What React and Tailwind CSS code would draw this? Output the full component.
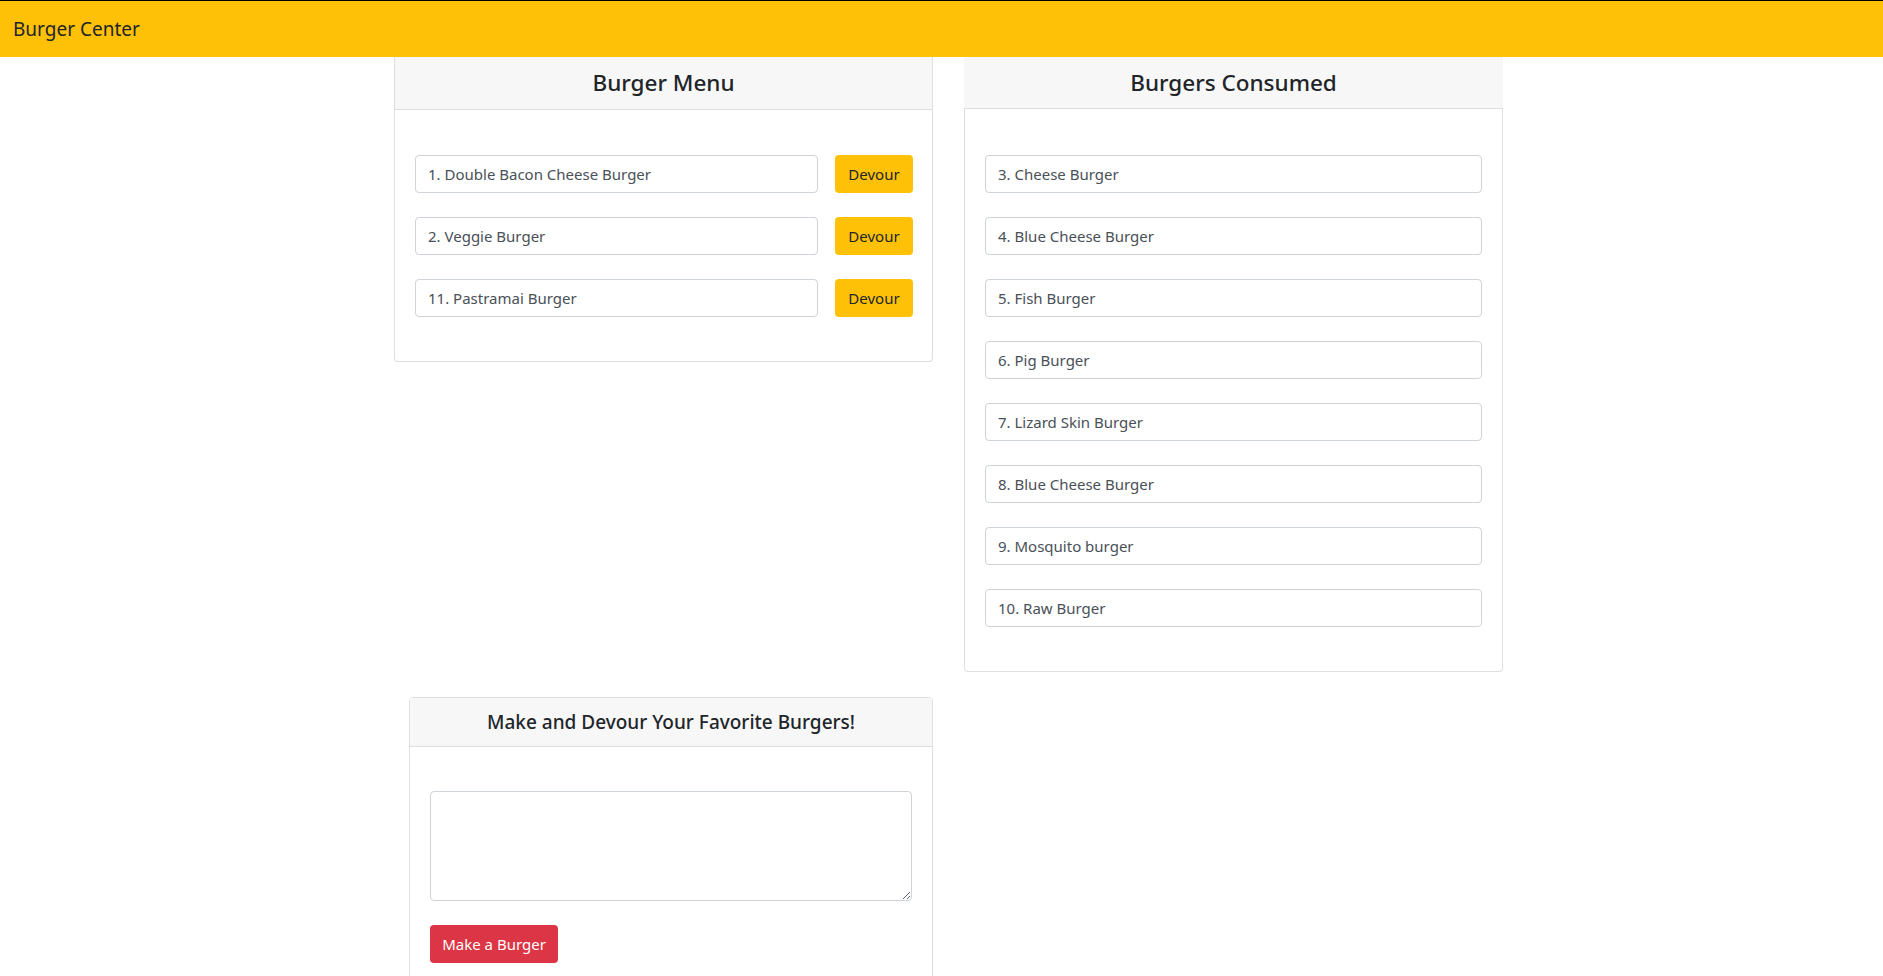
import React from "react";

const font = { fontFamily: '"Segoe UI", "Noto Sans", "Open Sans", Arial, sans-serif' };

const menu = ["1. Double Bacon Cheese Burger", "2. Veggie Burger", "11. Pastramai Burger"];
const consumed = [
  "3. Cheese Burger",
  "4. Blue Cheese Burger",
  "5. Fish Burger",
  "6. Pig Burger",
  "7. Lizard Skin Burger",
  "8. Blue Cheese Burger",
  "9. Mosquito burger",
  "10. Raw Burger",
];

function Field({ value, grow }) {
  return (
    <div
      className={
        grow
          ? "flex h-[38px] min-w-0 flex-1 items-center rounded-[4px] border border-[#ced4da] bg-white px-[12px] text-[15px] text-[#495057]"
          : "flex h-[38px] w-full shrink-0 items-center rounded-[4px] border border-[#ced4da] bg-white px-[12px] text-[15px] text-[#495057]"
      }
    >
      {value}
    </div>
  );
}

export default function App() {
  return (
    <div className="min-h-screen bg-white text-[#212529]" style={font}>
      <nav className="flex h-[57px] items-center border-t border-black bg-[#ffc107] px-[13px] text-[19px] text-[#212529]">
        Burger Center
      </nav>

      <div className="flex items-start gap-[31px] pl-[394px]">
        <div className="w-[539px] rounded-b-[4px] border-x border-b border-[#dfdfdf]">
          <div className="flex h-[53px] items-center justify-center border-b border-[#dfdfdf] bg-[#f7f7f7] text-[22.5px] font-medium">
            Burger Menu
          </div>
          <div className="flex flex-col gap-[24px] pb-[44px] pl-[20px] pr-[19px] pt-[45px]">
            {menu.map((m) => (
              <div key={m} className="flex items-center gap-[17px]">
                <Field value={m} grow />
                <button className="h-[38px] w-[78px] shrink-0 rounded-[4px] bg-[#ffc107] text-[15px] text-[#212529]">
                  Devour
                </button>
              </div>
            ))}
          </div>
        </div>

        <div className="w-[539px]">
          <div className="flex h-[52px] items-center justify-center border-b border-[#dfdfdf] bg-[#f7f7f7] text-[22.5px] font-medium">
            Burgers Consumed
          </div>
          <div className="flex flex-col gap-[24px] rounded-b-[4px] border-x border-b border-[#dfdfdf] pb-[44px] pl-[20px] pr-[20px] pt-[46px]">
            {consumed.map((c) => (
              <Field key={c} value={c} />
            ))}
          </div>
        </div>
      </div>

      <div className="mt-[25px] pl-[409px]">
        <div className="w-[524px] rounded-[4px] border border-[#dfdfdf]">
          <div className="flex h-[49px] items-center justify-center border-b border-[#dfdfdf] bg-[#f7f7f7] text-[19px] font-medium">
            Make and Devour Your Favorite Burgers!
          </div>
          <div className="px-[20px] pb-[20px] pt-[44px]">
            <textarea className="block h-[110px] w-full rounded-[4px] border border-[#ced4da] bg-white px-[12px] py-[6px] text-[15px]" />
            <button className="mt-[24px] h-[38px] w-[128px] rounded-[4px] bg-[#dc3545] text-[15px] text-white">
              Make a Burger
            </button>
          </div>
        </div>
      </div>
    </div>
  );
}
